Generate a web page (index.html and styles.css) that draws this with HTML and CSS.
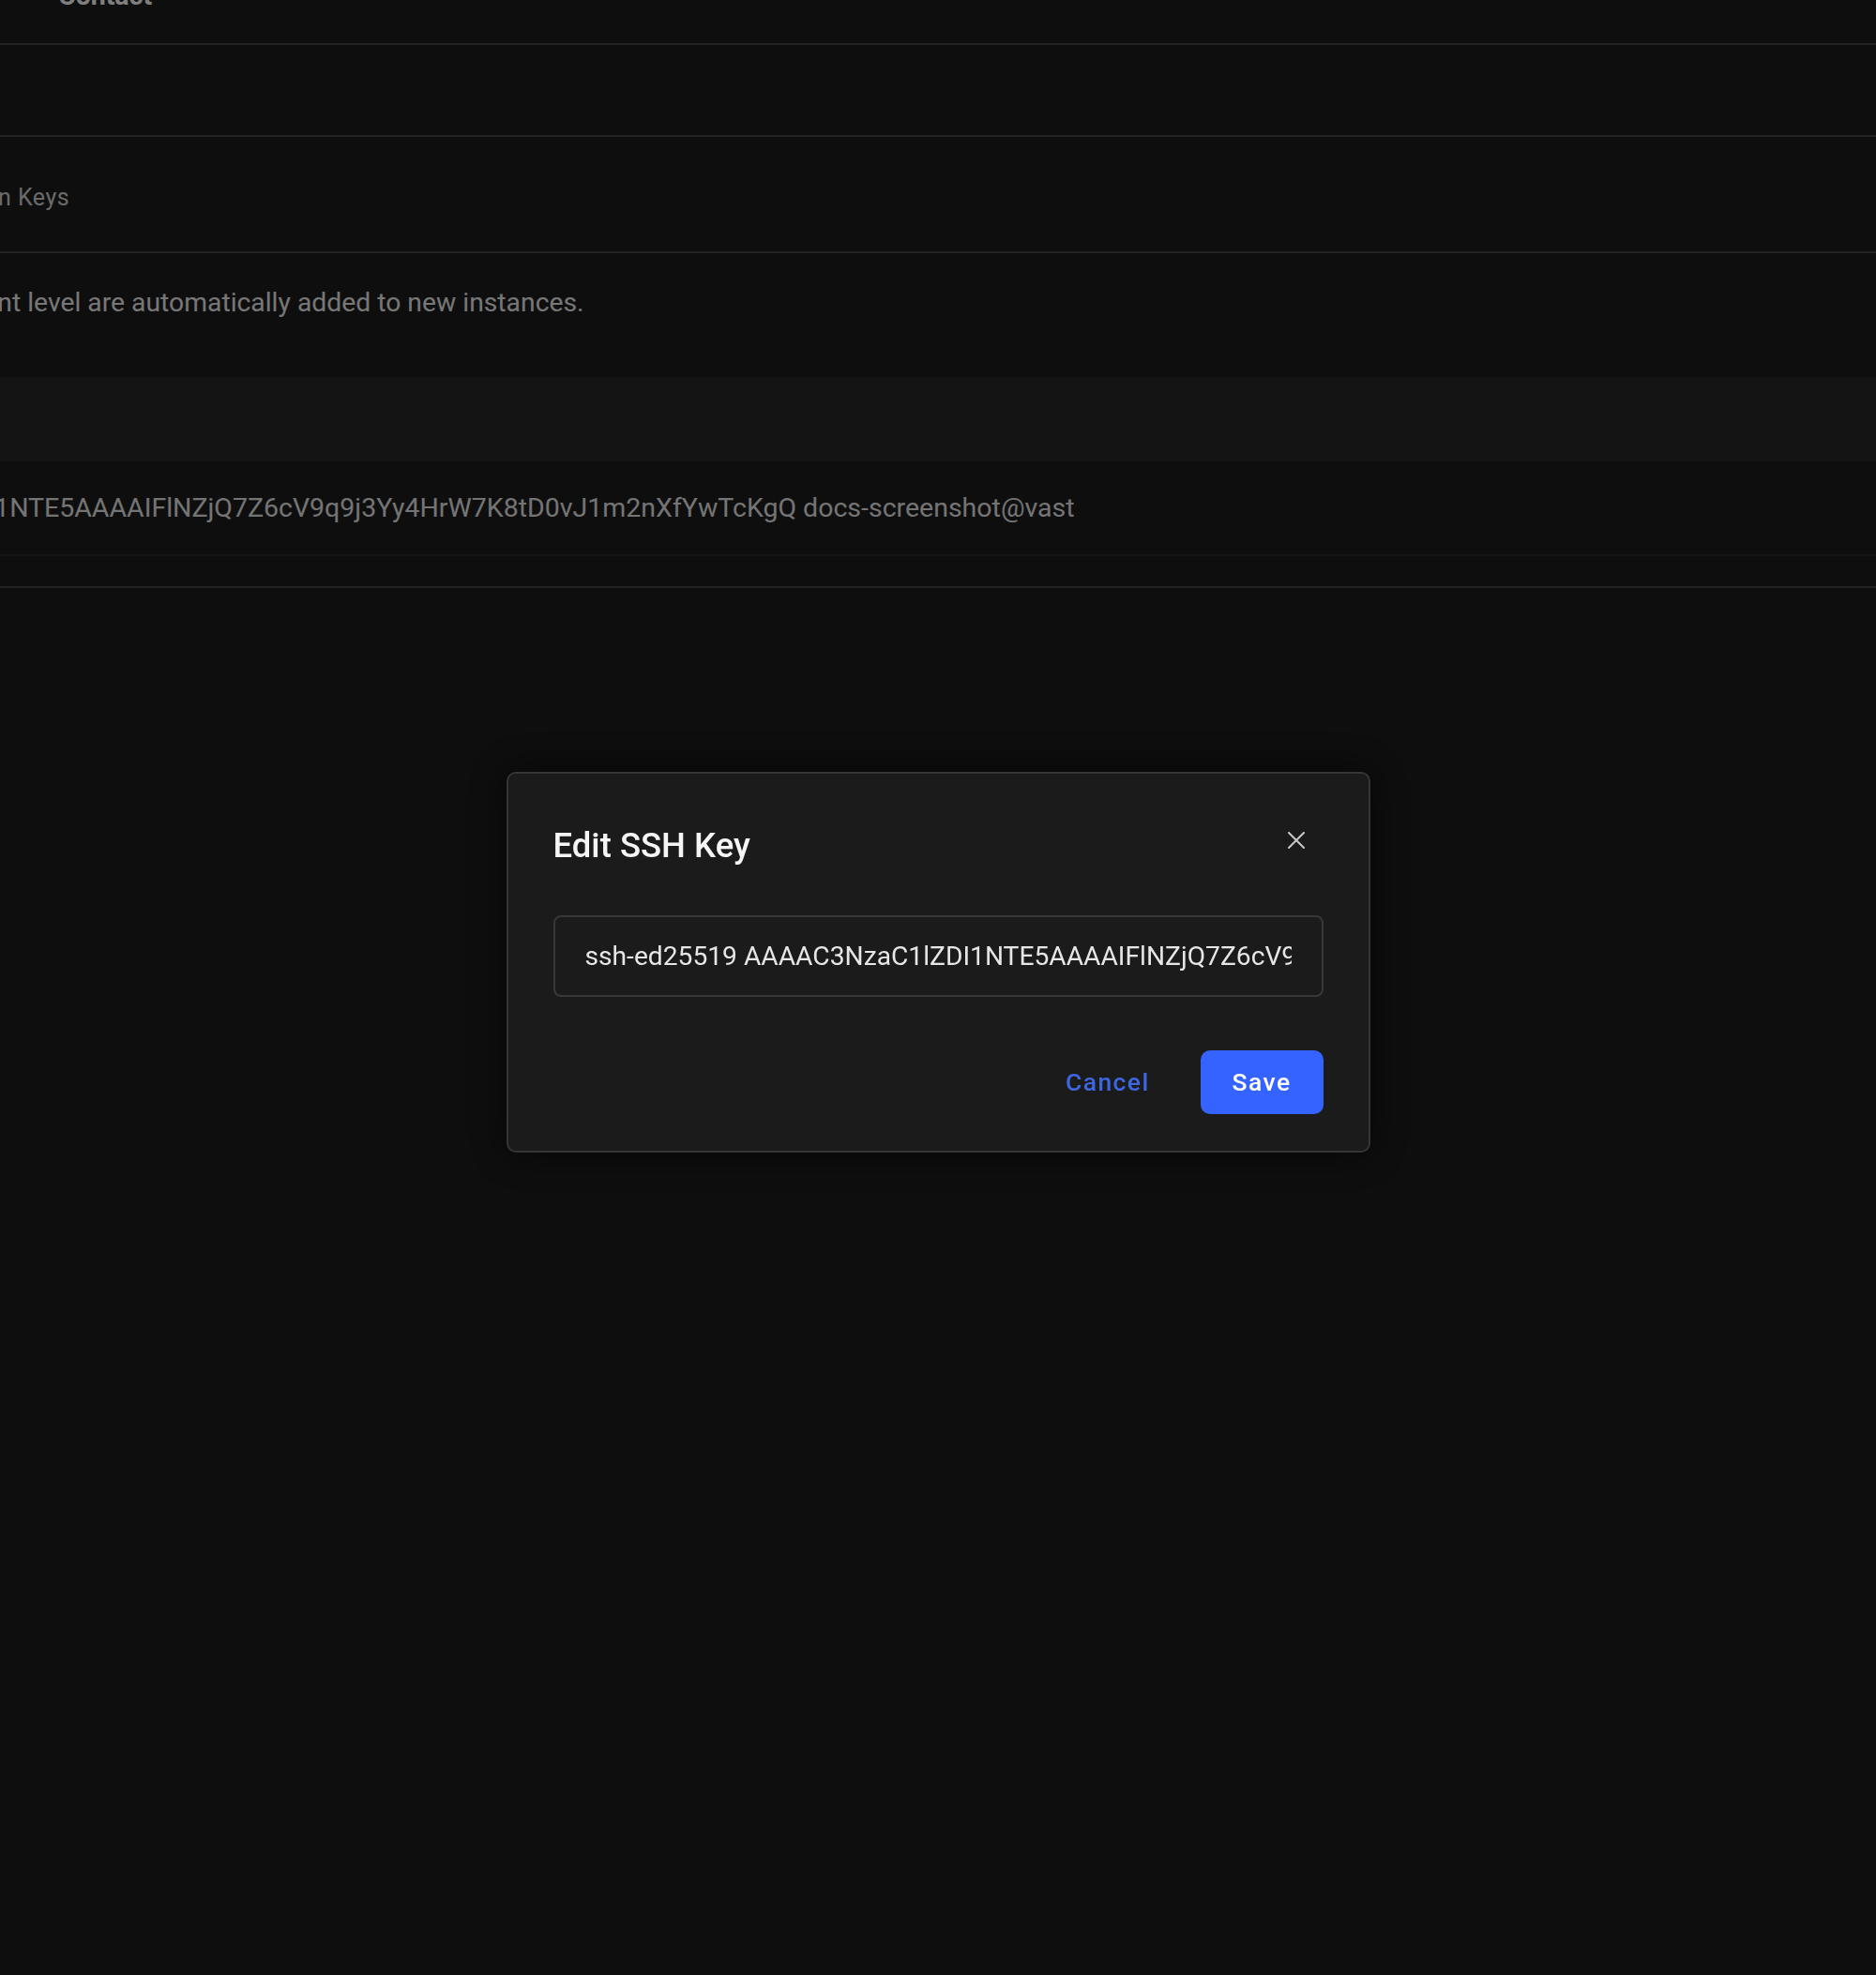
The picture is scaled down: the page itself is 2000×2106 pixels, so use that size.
FILE: index.html
```html
<!DOCTYPE html>
<html lang="en">
<head>
  <meta charset="UTF-8">
  <title>SSH Keys - Account</title>
  <link rel="stylesheet" href="styles.css">
</head>
<body>

  <!-- Top navigation -->
  <header class="topbar">
    <nav class="top-nav">
      <a href="#">Contact</a>
    </nav>
  </header>

  <div class="tabs-row"></div>

  <!-- Page content (scrolled to the right) -->
  <main class="content">
    <div class="crumbs">
      <span class="crumb">Authentication Keys</span>
    </div>

    <section class="keys">
      <p class="intro">SSH keys added at the account level are automatically added to new instances.</p>

      <div class="table">
        <div class="table-head"></div>
        <div class="table-row">
          <span class="key-text">ssh-ed25519 AAAAC3NzaC1lZDI1NTE5AAAAIFlNZjQ7Z6cV9q9j3Yy4HrW7K8tD0vJ1m2nXfYwTcKgQ docs-screenshot@vast</span>
        </div>
        <div class="table-foot"></div>
      </div>
    </section>
  </main>

  <!-- Edit modal -->
  <div class="backdrop">
    <div class="modal">
      <div class="modal-head">
        <h2>Edit SSH Key</h2>
        <button class="close-btn" type="button" aria-label="Close">
          <svg width="18" height="18" viewBox="0 0 18 18">
            <path d="M1 1 L17 17 M17 1 L1 17" stroke="#c9c9c9" stroke-width="2" stroke-linecap="round"/>
          </svg>
        </button>
      </div>
      <input class="key-input" type="text" value="ssh-ed25519 AAAAC3NzaC1lZDI1NTE5AAAAIFlNZjQ7Z6cV9q9j3Yy4HrW7K8tD0vJ1m2nXfYwTcKgQ docs-screenshot@vast">
      <div class="modal-actions">
        <button class="btn-link" type="button">Cancel</button>
        <button class="btn-primary" type="button">Save</button>
      </div>
    </div>
  </div>

</body>
</html>
```

FILE: styles.css
```css
/* Reset */
* {
  margin: 0;
  padding: 0;
  box-sizing: border-box;
}

body {
  font-family: 'Roboto', 'Liberation Sans', sans-serif;
  background-color: #1c1c1c;
  color: #eee;
  height: 2106px;
  overflow: hidden;
}

/* Header */
.topbar {
  display: flow-root;
  height: 48px;
  border-bottom: 2px solid #444;
}

.top-nav a {
  display: block;
  margin-top: -21px;
  margin-left: 62px;
  font-size: 28.5px;
  line-height: 1.2;
  font-weight: 700;
  color: #fff;
  text-decoration: none;
}

.tabs-row {
  height: 98px;
  border-bottom: 2px solid #444;
}

/* Content */
.content {
  margin-left: -421px;
}

.crumbs {
  height: 124px;
  border-bottom: 2px solid #444;
  display: flex;
  align-items: center;
  padding-left: 264px;
  padding-top: 6px;
}

.crumb {
  font-size: 25px;
  letter-spacing: 0.5px;
  color: #d4d4d4;
}

.intro {
  height: 132px;
  padding-top: 36px;
  padding-left: 53px;
  font-size: 28.3px;
  line-height: 1.2;
  color: #eee;
}

.table-head {
  height: 90px;
  background-color: #282828;
}

.table-row {
  height: 101px;
  border-bottom: 2px solid #2a2a2a;
  display: flex;
  align-items: center;
}

.key-text {
  font-size: 28.5px;
  color: #e8e8e8;
}

.table-foot {
  height: 34px;
  border-bottom: 2px solid #444;
}

/* Modal */
.backdrop {
  position: fixed;
  inset: 0;
  background-color: rgba(0, 0, 0, 0.5);
  display: flex;
  justify-content: center;
  align-items: center;
  padding-bottom: 54px;
}

.modal {
  width: 921px;
  background-color: #1b1b1b;
  border: 2px solid #353535;
  border-radius: 10px;
  padding: 55px 48px 39px;
  box-shadow: 0 0 40px rgba(0, 0, 0, 0.6);
}

.modal-head {
  display: flex;
  justify-content: space-between;
  align-items: flex-start;
}

.modal-head h2 {
  font-size: 36.5px;
  line-height: 1.2;
  font-weight: 500;
  color: #f5f5f5;
}

.close-btn {
  width: 40px;
  height: 40px;
  margin-top: -4px;
  margin-right: 9px;
  background: none;
  border: none;
  display: flex;
  justify-content: center;
  align-items: center;
  cursor: pointer;
}

.key-input {
  display: block;
  width: 100%;
  height: 87px;
  margin-top: 52px;
  padding: 0 32px;
  background-color: transparent;
  border: 2px solid #383838;
  border-radius: 8px;
  font-family: 'Roboto', 'Liberation Sans', sans-serif;
  font-size: 28.2px;
  color: #e6e6e6;
  outline: none;
}

.modal-actions {
  margin-top: 57px;
  display: flex;
  justify-content: flex-end;
  align-items: center;
  gap: 20px;
}

.btn-link,
.btn-primary {
  height: 68px;
  padding: 0 34px;
  font-family: 'Roboto', 'Liberation Sans', sans-serif;
  font-size: 26.5px;
  font-weight: 500;
  letter-spacing: 1.4px;
  border: none;
  border-radius: 10px;
  cursor: pointer;
}

.btn-link {
  background: none;
  color: #3d66e0;
}

.btn-primary {
  background-color: #3563ff;
  color: #fff;
}
```
